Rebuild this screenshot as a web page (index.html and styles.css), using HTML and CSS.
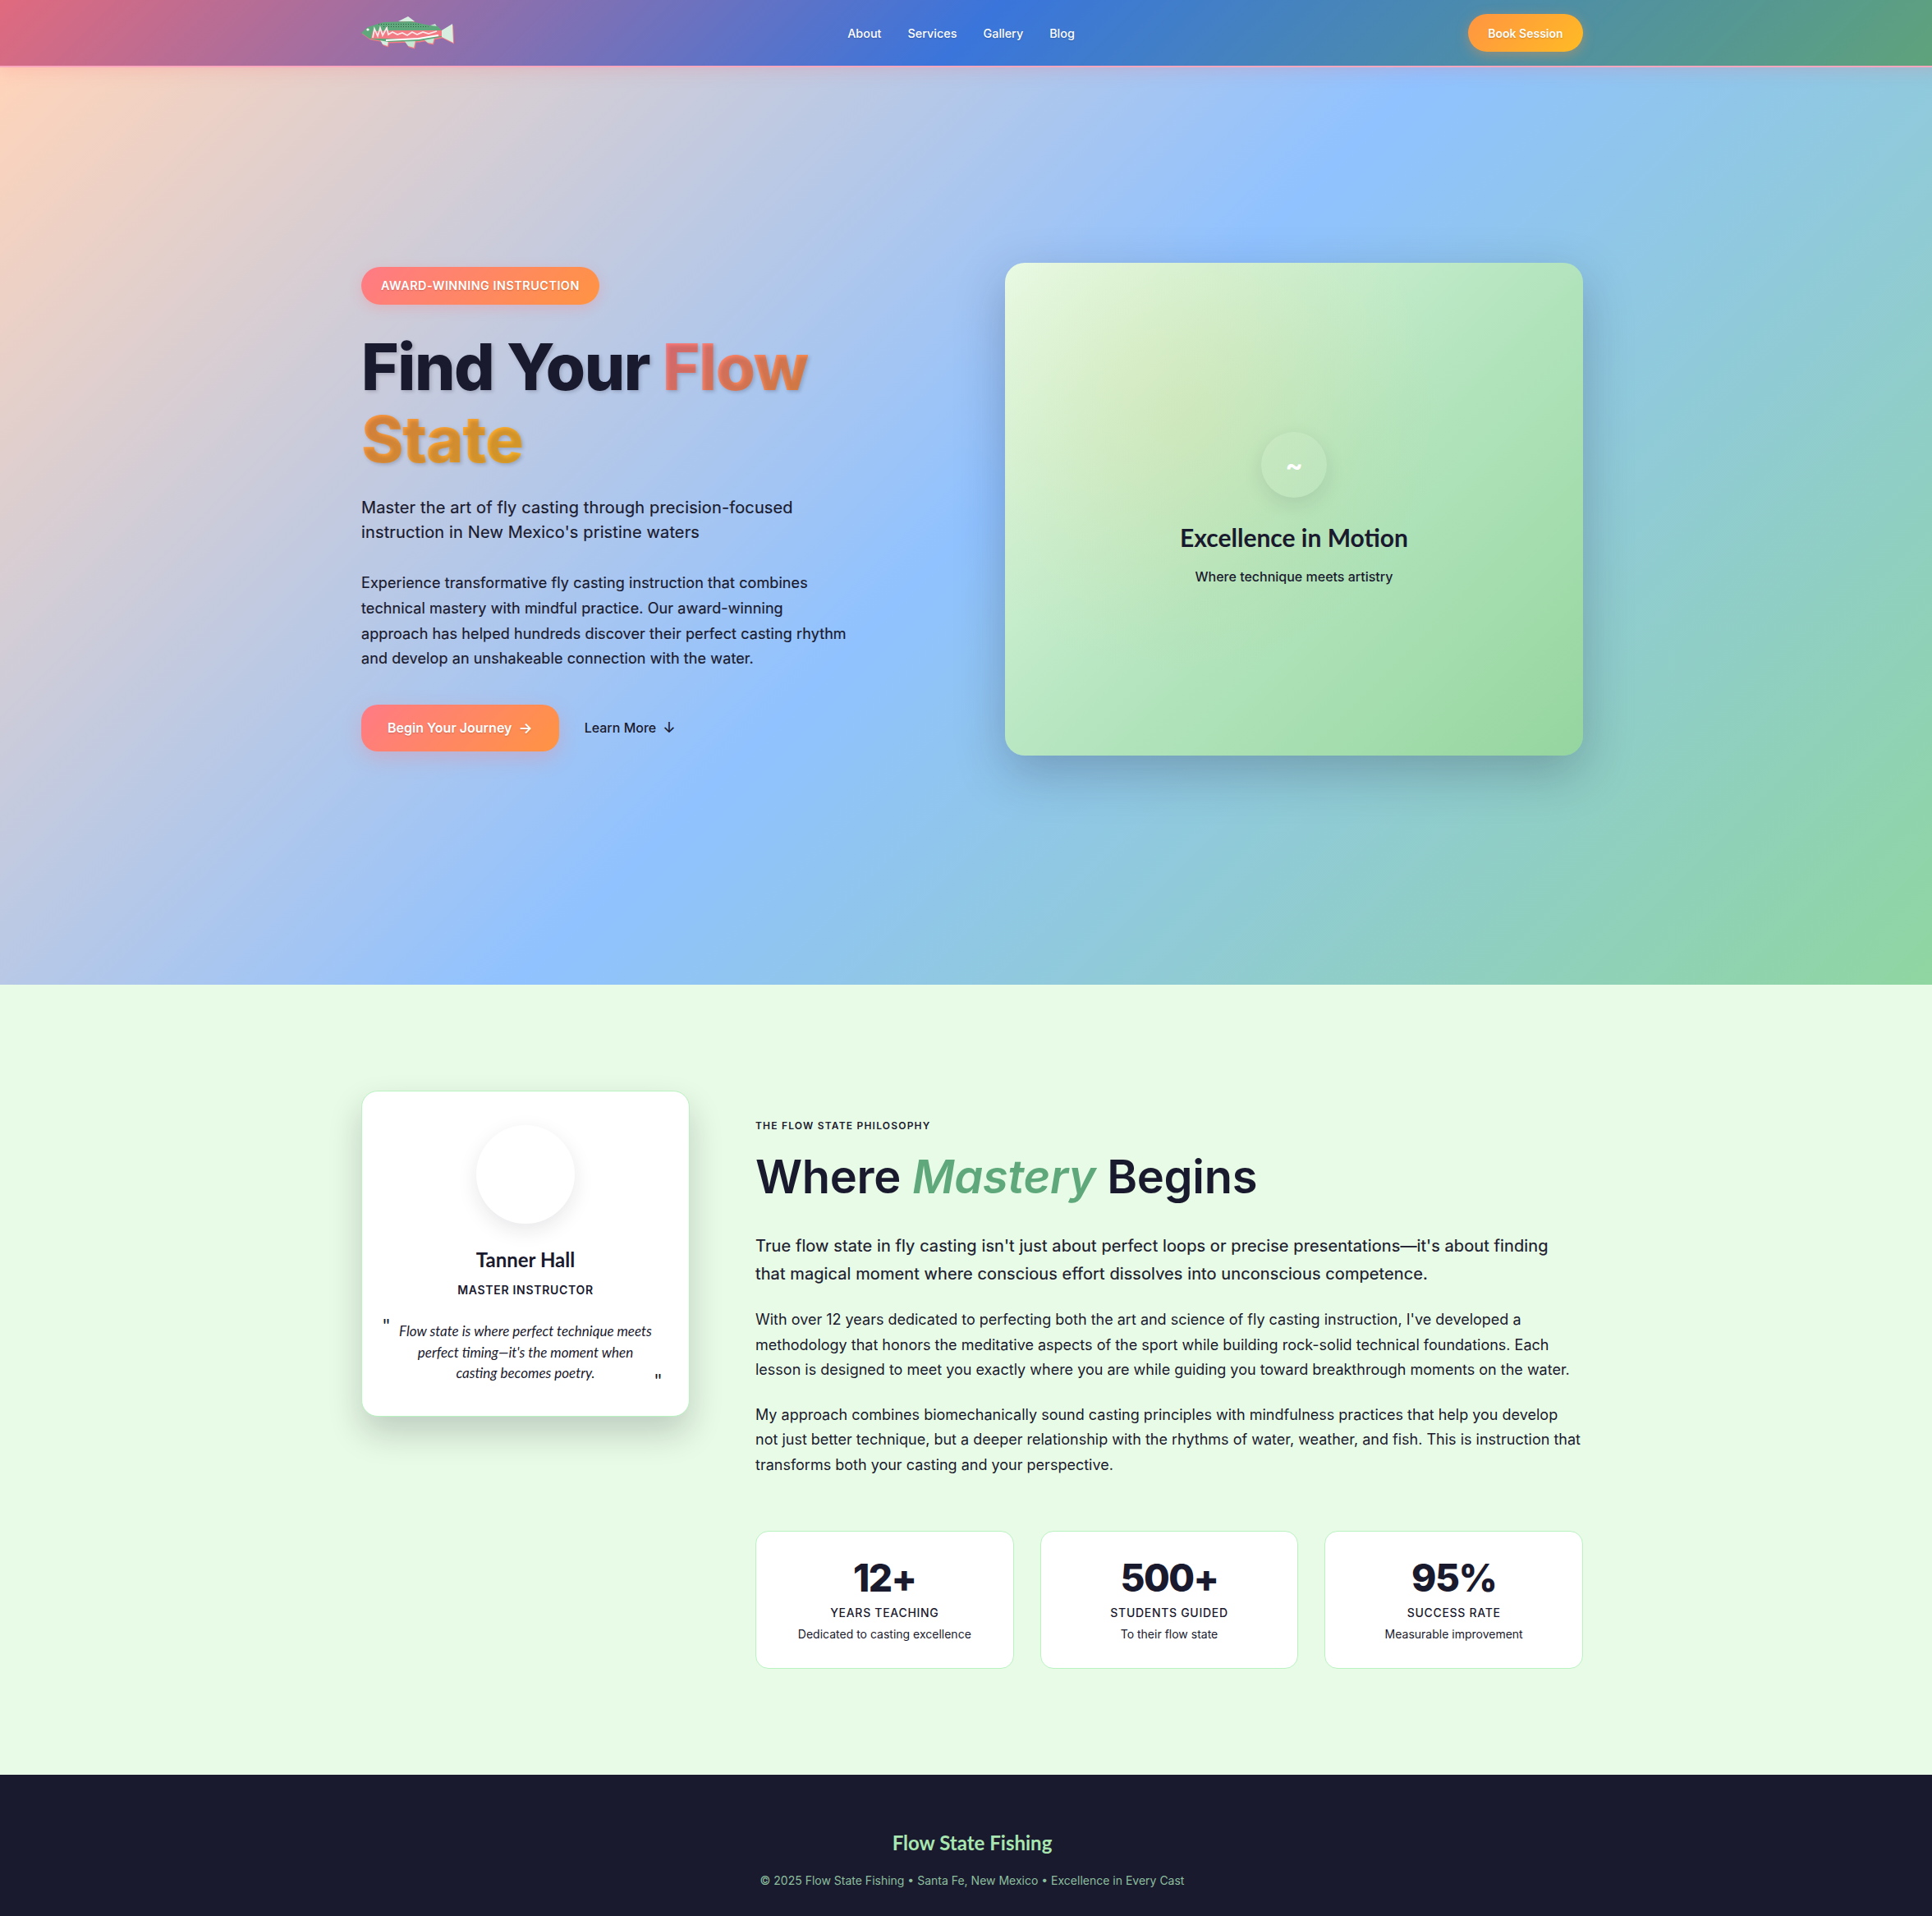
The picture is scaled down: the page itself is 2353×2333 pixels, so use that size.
FILE: index.html

```html
<!DOCTYPE html>
<html lang="en">
<head>
  <meta charset="UTF-8" />
  <title>Flow State Fishing</title>
  <link rel="stylesheet" href="styles.css">
</head>
<body>
  <nav class="nav">
    <div class="container nav-row">
      <a class="logo" href="#">
        <svg class="fish" width="113" height="40" viewBox="0 0 113 40">
          <defs>
            <pattern id="speck" width="3" height="3" patternUnits="userSpaceOnUse">
              <rect width="1" height="1" fill="#2f5f48"/>
            </pattern>
          </defs>
          <g fill="#f27b84" transform="translate(1 1.5)">
            <path d="M0 20 8 13 27 7 60 6 84 11 93 12 98 17 111 9 112 32 98 25 70 30 33 31 10 27Z"/>
            <path d="M45 6 57 0 65 6Z"/>
            <path d="M22 27 33 29 32 36 26 34Z"/>
            <path d="M52 29 66 29 64 38 57 36Z"/>
            <path d="M76 28 89 26 87 33 81 32Z"/>
          </g>
          <path d="M45 6 57 0 65 6Z" fill="#d7efe0"/>
          <path d="M22 27 33 29 32 36 26 34Z" fill="#d7efe0"/>
          <path d="M52 29 66 29 64 38 57 36Z" fill="#c7e6d3"/>
          <path d="M76 28 89 26 87 33 81 32Z" fill="#c7e6d3"/>
          <path d="M81 12 90 9 93 14Z" fill="#c7e6d3"/>
          <path d="M98 17 111 9 112 32 98 25Z" fill="#d7efe0"/>
          <path d="M0 20 8 13 27 7 60 6 84 11 93 12 98 17 98 25 70 30 33 31 10 27Z" fill="#5ea87b"/>
          <path d="M20 9 60 7 84 12 70 15 30 15Z" fill="url(#speck)"/>
          <path d="M12 27 14 18 40 17 98 17 98 24 70 27 33 27Z" fill="#f27b84"/>
          <path d="M30 29 70 27 94 23" fill="none" stroke="#fff" stroke-width="2.2"/>
          <path d="M14 26 16 15 20 24 23 14 26 23 31 14 33 22 38 19 44 22 50 20 56 23 62 19 68 22 75 19 82 21 92 18" fill="none" stroke="#fde6e8" stroke-width="1.8"/>
          <circle cx="8" cy="16" r="1.6" fill="#fff"/>
        </svg>
      </a>
      <ul class="nav-links">
        <li><a href="#">About</a></li>
        <li><a href="#">Services</a></li>
        <li><a href="#">Gallery</a></li>
        <li><a href="#">Blog</a></li>
      </ul>
      <a class="nav-cta" href="#">Book Session</a>
    </div>
  </nav>

  <section class="hero">
    <div class="container hero-grid">
      <div class="hero-text">
        <span class="badge">AWARD-WINNING INSTRUCTION</span>
        <h1>Find Your <span class="grad-flow">Flow</span> <span class="grad-state">State</span></h1>
        <p class="hero-sub">Master the art of fly casting through precision-focused instruction in New Mexico's pristine waters</p>
        <p class="hero-desc">Experience transformative fly casting instruction that combines technical mastery with mindful practice. Our award-winning approach has helped hundreds discover their perfect casting rhythm and develop an unshakeable connection with the water.</p>
        <div class="hero-actions">
          <a class="btn-main" href="#">Begin Your Journey <span>→</span></a>
          <a class="btn-link" href="#">Learn More <span>↓</span></a>
        </div>
      </div>
      <div class="hero-card">
        <div class="wave">~</div>
        <h3>Excellence in Motion</h3>
        <p>Where technique meets artistry</p>
      </div>
    </div>
  </section>

  <section class="about">
    <div class="container about-grid">
      <div class="profile">
        <div class="avatar"></div>
        <h3>Tanner Hall</h3>
        <div class="role">MASTER INSTRUCTOR</div>
        <p class="quote">Flow state is where perfect technique meets perfect timing—it's the moment when casting becomes poetry.</p>
      </div>
      <div class="about-text">
        <div class="eyebrow">THE FLOW STATE PHILOSOPHY</div>
        <h2>Where <em>Mastery</em> Begins</h2>
        <p class="lead">True flow state in fly casting isn't just about perfect loops or precise presentations—it's about finding that magical moment where conscious effort dissolves into unconscious competence.</p>
        <p class="copy">With over 12 years dedicated to perfecting both the art and science of fly casting instruction, I've developed a methodology that honors the meditative aspects of the sport while building rock-solid technical foundations. Each lesson is designed to meet you exactly where you are while guiding you toward breakthrough moments on the water.</p>
        <p class="copy">My approach combines biomechanically sound casting principles with mindfulness practices that help you develop not just better technique, but a deeper relationship with the rhythms of water, weather, and fish. This is instruction that transforms both your casting and your perspective.</p>
        <div class="stats">
          <div class="stat">
            <div class="stat-num">12+</div>
            <div class="stat-label">YEARS TEACHING</div>
            <div class="stat-sub">Dedicated to casting excellence</div>
          </div>
          <div class="stat">
            <div class="stat-num">500+</div>
            <div class="stat-label">STUDENTS GUIDED</div>
            <div class="stat-sub">To their flow state</div>
          </div>
          <div class="stat">
            <div class="stat-num">95%</div>
            <div class="stat-label">SUCCESS RATE</div>
            <div class="stat-sub">Measurable improvement</div>
          </div>
        </div>
      </div>
    </div>
  </section>

  <footer class="footer">
    <div class="footer-name">Flow State Fishing</div>
    <p>© 2025 Flow State Fishing • Santa Fe, New Mexico • Excellence in Every Cast</p>
  </footer>
</body>
</html>
```

FILE: styles.css

```css
* {
  margin: 0;
  padding: 0;
  box-sizing: border-box;
}
html {
  overflow: hidden;
}
body {
  width: 2368px;
  font-family: Inter, "Liberation Sans", sans-serif;
  color: #1a1a2e;
  background: #e8fbe6;
}
a {
  color: inherit;
  text-decoration: none;
}
ul {
  list-style: none;
}
.container {
  max-width: 1536px;
  margin: 0 auto;
  padding: 0 24px;
}

/* nav */
.nav {
  height: 82px;
  background: linear-gradient(135deg, #e06a7e 0%, #3a75db 50%, #5fa37a 100%);
  border-bottom: 2px solid #f9a8bf;
  box-shadow: 0 4px 20px rgba(255, 107, 122, 0.2);
  position: relative;
}
.nav-row {
  height: 80px;
  display: flex;
  align-items: center;
  justify-content: space-between;
}
.logo {
  display: flex;
}
.nav-links {
  display: flex;
  gap: 32px;
}
.nav-links a {
  color: #fff;
  font-size: 14.4px;
  font-weight: 500;
  text-shadow: 0 1px 2px rgba(0, 0, 0, 0.2);
}
.nav-cta {
  width: 140px;
  height: 46px;
  border-radius: 23px;
  display: flex;
  align-items: center;
  justify-content: center;
  color: #fff;
  font-size: 14px;
  font-weight: 600;
  background: linear-gradient(135deg, #ff9442, #ffbb24);
  box-shadow: 0 4px 15px rgba(255, 148, 66, 0.4);
  text-shadow: 0 1px 2px rgba(0, 0, 0, 0.2);
}

/* hero */
.hero {
  padding: 238px 0 279px;
  background: linear-gradient(135deg, #ffd4ba 0%, #90c2ff 50%, #8fd6a0 100%);
}
.hero-grid {
  display: grid;
  grid-template-columns: 1fr 1fr;
  gap: 80px;
  align-items: center;
}
.hero-text {
  max-width: 600px;
}
.badge {
  display: inline-block;
  padding: 12px 24px;
  border-radius: 23px;
  font-size: 14.4px;
  line-height: 22px;
  font-weight: 600;
  letter-spacing: 0.5px;
  color: #fff;
  background: linear-gradient(135deg, #ff7a85, #ff9442);
  box-shadow: 0 4px 15px rgba(255, 122, 133, 0.3);
  text-shadow: 0 1px 2px rgba(0, 0, 0, 0.2);
}
h1 {
  margin-top: 32px;
  font-size: 78px;
  line-height: 88px;
  font-weight: 800;
  letter-spacing: -1.4px;
  text-shadow: 2px 2px 4px rgba(26, 26, 46, 0.2);
}
.grad-flow,
.grad-state {
  -webkit-background-clip: text;
  background-clip: text;
  color: transparent;
}
.grad-flow {
  background-image: linear-gradient(135deg, #ff7a85, #ff9442);
}
.grad-state {
  background-image: linear-gradient(135deg, #ff9442, #ffbb24);
}
.hero-sub {
  margin-top: 24px;
  font-size: 20px;
  line-height: 30px;
  letter-spacing: 0.14px;
  -webkit-text-stroke: 0.2px;
}
.hero-desc {
  margin-top: 32px;
  font-size: 18px;
  line-height: 30.6px;
  letter-spacing: 0.1px;
  -webkit-text-stroke: 0.2px;
}
.hero-actions {
  margin-top: 40px;
  display: flex;
  align-items: center;
  gap: 31px;
}
.hero-actions span {
  font-size: 18px;
}
.btn-main {
  display: flex;
  align-items: center;
  gap: 8px;
  height: 57px;
  padding: 0 32px;
  border-radius: 20px;
  color: #fff;
  font-size: 16px;
  font-weight: 600;
  background: linear-gradient(135deg, #ff7a85, #ff9442);
  box-shadow: 0 8px 25px rgba(255, 122, 133, 0.3);
  text-shadow: 0 1px 2px rgba(0, 0, 0, 0.2);
}
.btn-link {
  display: flex;
  align-items: center;
  gap: 8px;
  font-size: 16px;
  font-weight: 500;
}
.hero-card {
  height: 600px;
  border-radius: 24px;
  display: flex;
  flex-direction: column;
  align-items: center;
  justify-content: center;
  background:
    radial-gradient(circle at 30% 30%, rgba(255, 190, 60, 0.12), transparent 50%),
    linear-gradient(135deg, #e8fbe6 0%, #b5e5bf 50%, #95d59f 100%);
  box-shadow: 0 20px 60px rgba(26, 26, 46, 0.25);
}
.wave {
  width: 80px;
  height: 80px;
  border-radius: 50%;
  display: flex;
  align-items: center;
  justify-content: center;
  color: #fff;
  font-size: 32px;
  font-weight: 700;
  background: rgba(255, 255, 255, 0.08);
  box-shadow: 0 8px 25px rgba(26, 26, 46, 0.1);
}
.hero-card h3 {
  margin-top: 28px;
  font-family: Lato, sans-serif;
  font-size: 30px;
  line-height: 40px;
  font-weight: 700;
}
.hero-card p {
  margin-top: 16px;
  font-size: 16px;
  line-height: 24px;
  font-weight: 500;
}

/* about */
.about {
  padding: 129px 0;
  background: #e8fbe6;
}
.about-grid {
  display: grid;
  grid-template-columns: 400px 1fr;
  gap: 80px;
  align-items: start;
}
.profile {
  padding: 41px 24px 39px;
  background: #fff;
  border: 1px solid #b9f3c0;
  border-radius: 20px;
  text-align: center;
  box-shadow: 0 20px 40px rgba(26, 26, 46, 0.2);
}
.avatar {
  width: 120px;
  height: 120px;
  margin: 0 auto;
  border-radius: 50%;
  background: #fff;
  box-shadow: 0 8px 25px rgba(26, 26, 46, 0.1);
}
.profile h3 {
  margin-top: 28px;
  font-family: Lato, sans-serif;
  font-size: 24px;
  line-height: 32px;
  font-weight: 700;
}
.role {
  margin-top: 9.5px;
  font-size: 14px;
  line-height: 22px;
  font-weight: 600;
  letter-spacing: 0.7px;
}
.quote {
  position: relative;
  margin-top: 26.5px;
  padding: 0 20px;
  font-family: Lato, sans-serif;
  font-size: 17px;
  line-height: 25.5px;
  font-style: italic;
}
.quote::before,
.quote::after {
  content: '"';
  position: absolute;
  font-size: 24px;
  font-style: normal;
  line-height: 24px;
}
.quote::before {
  left: 1px;
  top: -6px;
}
.quote::after {
  right: 9px;
  bottom: -8px;
}
.about-text {
  padding-top: 34px;
}
.eyebrow {
  font-size: 12px;
  line-height: 18px;
  font-weight: 600;
  letter-spacing: 1.2px;
}
h2 {
  margin-top: 20px;
  font-size: 56px;
  line-height: 67px;
  font-weight: 600;
  letter-spacing: -0.3px;
}
h2 em {
  color: #5fa87c;
}
.lead {
  margin-top: 33px;
  padding-right: 16px;
  font-size: 20px;
  line-height: 34px;
  letter-spacing: 0.1px;
  -webkit-text-stroke: 0.2px;
}
.copy {
  margin-top: 24px;
  font-size: 18px;
  line-height: 30.6px;
}
.stats {
  margin-top: 64px;
  display: grid;
  grid-template-columns: repeat(3, 1fr);
  gap: 32px;
}
.stat {
  height: 168px;
  padding-top: 28px;
  background: #fff;
  border: 1px solid #b9f3c0;
  border-radius: 16px;
  text-align: center;
}
.stat-num {
  font-size: 46px;
  line-height: 56px;
  font-weight: 800;
  letter-spacing: -1.5px;
}
.stat-label {
  margin-top: 4px;
  font-size: 14px;
  line-height: 22px;
  font-weight: 500;
  letter-spacing: 0.7px;
}
.stat-sub {
  margin-top: 4.5px;
  font-size: 14px;
  line-height: 22px;
}

/* footer */
.footer {
  height: 173px;
  padding-top: 67px;
  background: #1a1a2e;
  text-align: center;
}
.footer-name {
  color: #a8e6b0;
  font-family: Lato, sans-serif;
  font-size: 24px;
  line-height: 32px;
  font-weight: 700;
}
.footer p {
  margin-top: 19px;
  color: #8cbf9e;
  font-size: 14px;
  line-height: 22px;
}
```
